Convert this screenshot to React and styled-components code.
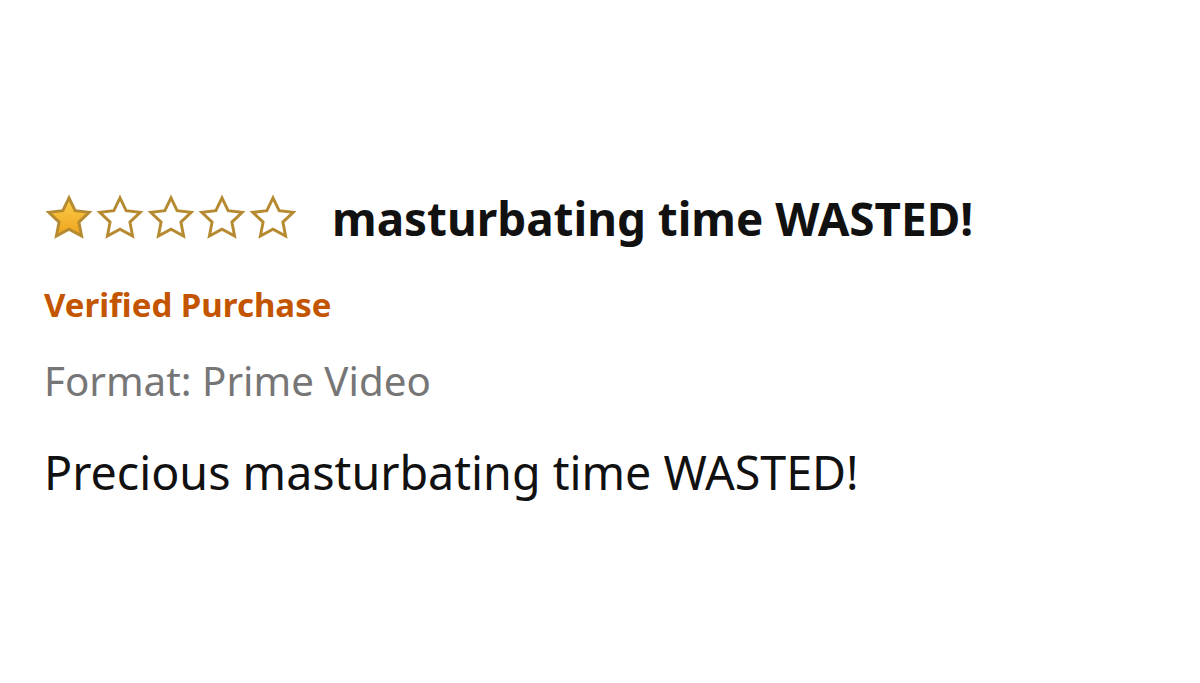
import React from "react";
import styled, { createGlobalStyle } from "styled-components";

const COLORS = {
  text: "#111111",
  orange: "#c45500",
  gray: "#767676",
  starEdge: "#b58a30",
};

const GlobalStyle = createGlobalStyle`
  html, body {
    margin: 0;
    padding: 0;
    background: #ffffff;
  }
  body {
    font-family: "Noto Sans", "Open Sans", sans-serif;
    color: ${COLORS.text};
  }
`;

const STAR_PATH =
  "M12 2.3l2.95 6.15 6.75.85-4.95 4.65 1.3 6.7L12 17.35 5.95 20.65l1.3-6.7L2.3 9.3l6.75-.85z";

const Star = ({ filled }) => (
  <StarSvg viewBox="0 0 24 24" aria-hidden="true">
    <defs>
      <linearGradient id="starFill" x1="0" y1="0" x2="0" y2="1">
        <stop offset="0" stopColor="#fbcf4a" />
        <stop offset="1" stopColor="#eea21c" />
      </linearGradient>
    </defs>
    <path
      d={STAR_PATH}
      fill={filled ? "url(#starFill)" : "#ffffff"}
      stroke={COLORS.starEdge}
      strokeWidth="1.4"
      strokeLinejoin="miter"
    />
  </StarSvg>
);

const Rating = ({ value }) => (
  <Stars>
    {[1, 2, 3, 4, 5].map((n) => (
      <Star key={n} filled={n <= value} />
    ))}
  </Stars>
);

const App = () => {
  return (
    <Page>
      <GlobalStyle />
      <Review>
        <Header>
          <Rating value={1} />
          <Title>masturbating time WASTED!</Title>
        </Header>
        <Verified>Verified Purchase</Verified>
        <Format>Format: Prime Video</Format>
        <Body>Precious masturbating time WASTED!</Body>
      </Review>
    </Page>
  );
};

const Page = styled.div`
  width: 1200px;
  height: 683px;
  box-sizing: border-box;
  padding: 186px 0 0 44px;
  background: #ffffff;
`;

const Review = styled.article`
  display: flex;
  flex-direction: column;
`;

const Header = styled.div`
  display: flex;
  align-items: center;
  gap: 34px;
  height: 64px;
`;

const Stars = styled.div`
  display: flex;
  gap: 1px;
`;

const StarSvg = styled.svg`
  width: 50px;
  height: 50px;
  display: block;
`;

const Title = styled.h2`
  margin: 0;
  font-size: 45.8px;
  line-height: 64px;
  font-weight: 700;
  color: ${COLORS.text};
`;

const Verified = styled.div`
  margin-top: 35px;
  font-size: 33px;
  line-height: 40px;
  font-weight: 700;
  color: ${COLORS.orange};
`;

const Format = styled.div`
  margin-top: 33px;
  font-size: 40.3px;
  line-height: 46px;
  color: ${COLORS.gray};
`;

const Body = styled.p`
  margin: 42px 0 0;
  font-size: 46.6px;
  line-height: 52px;
  color: ${COLORS.text};
`;

export default App;
